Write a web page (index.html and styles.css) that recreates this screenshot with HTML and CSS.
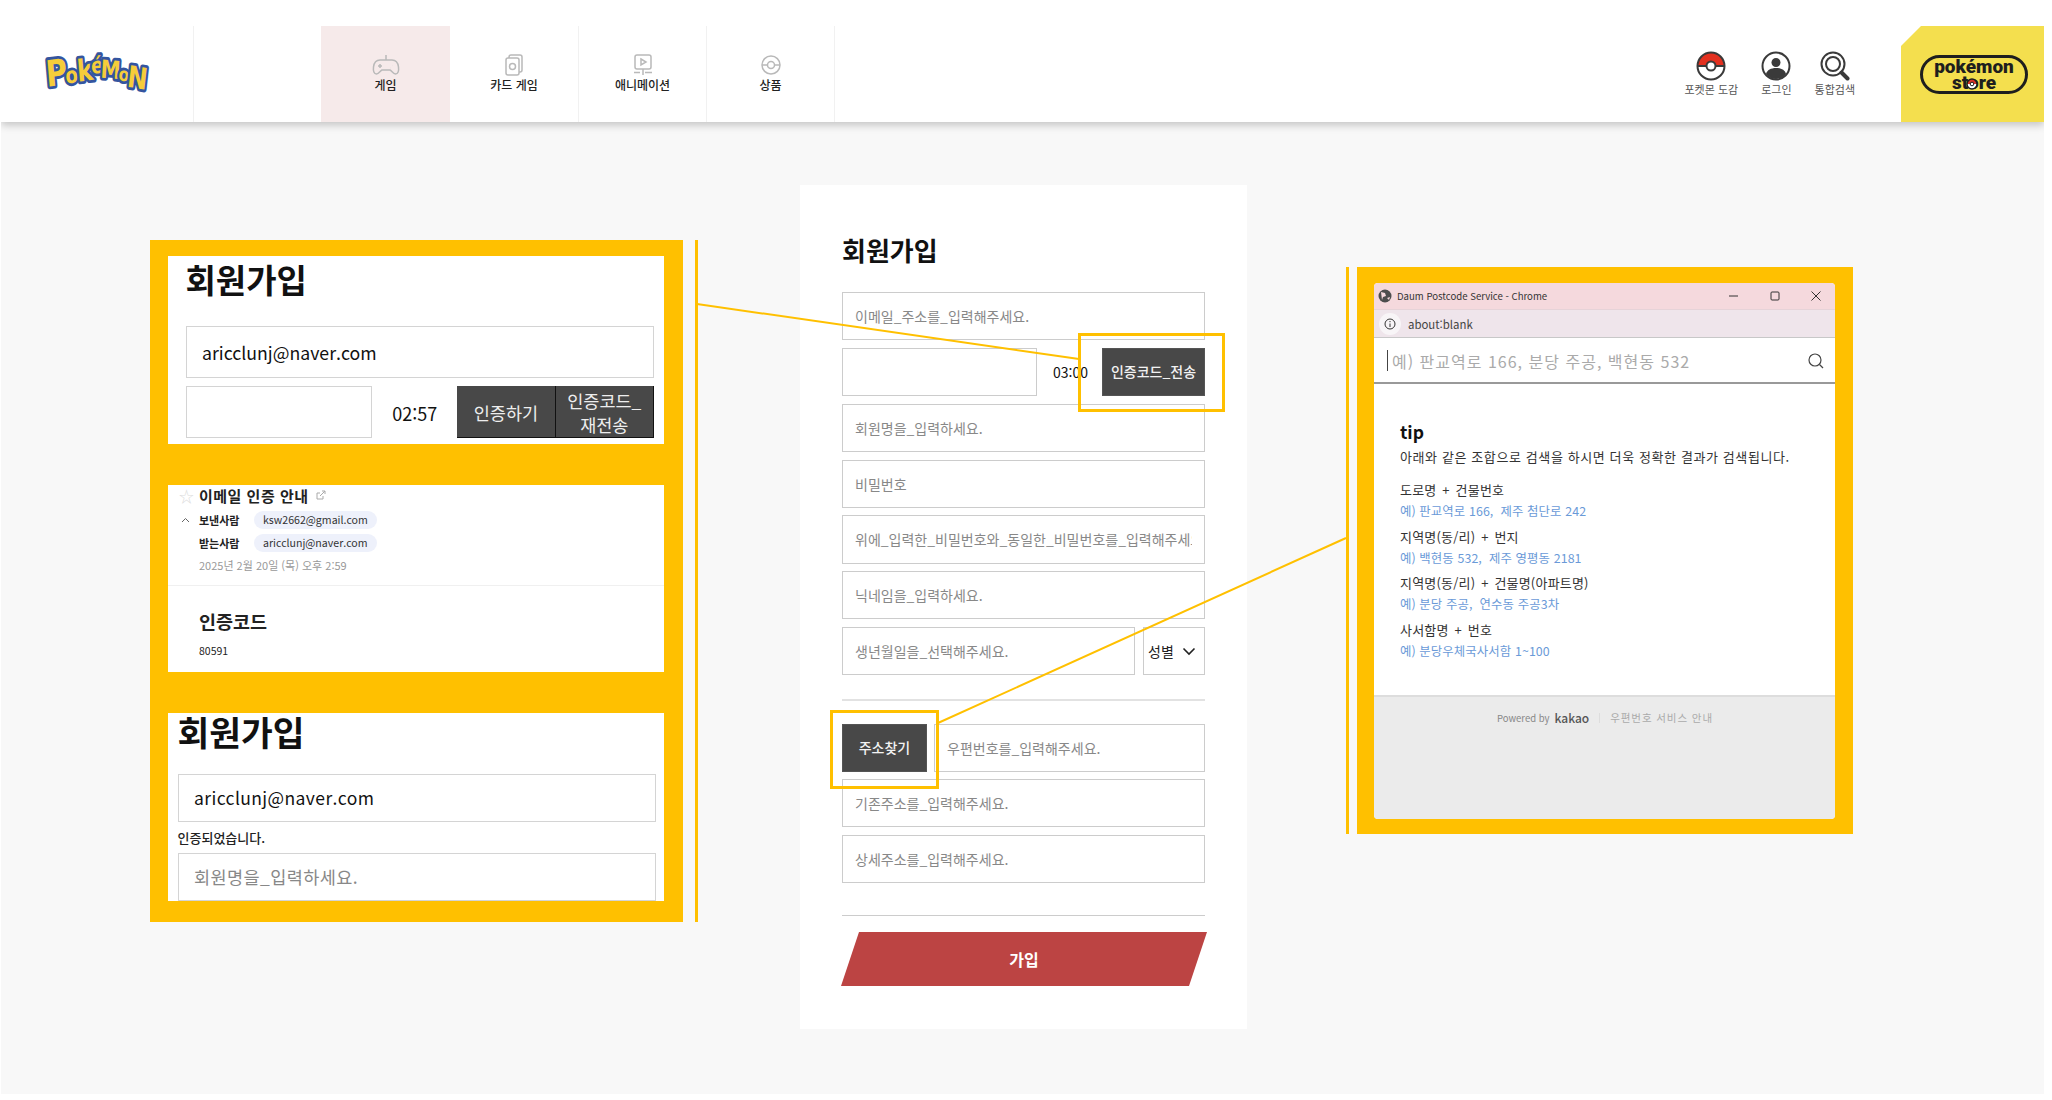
FILE: index.html
```html
<!DOCTYPE html>
<html lang="ko">
<head>
  <meta charset="UTF-8">
  <title>회원가입</title>
  <link rel="stylesheet" href="styles.css">
</head>
<body>
  <div id="shot">
    <header class="top">
      <a class="logo">
        <svg width="104" height="44" viewBox="0 0 104 44">
          <g class="logo-text" transform="translate(0 -7) scale(1 1.25)">
            <text x="1" y="32" font-size="29" transform="rotate(-6 8 22)">P</text>
            <text x="20" y="30" font-size="18" transform="rotate(-8 24 22)">o</text>
            <text x="32" y="28" font-size="24" transform="rotate(-6 38 18)">k</text>
            <text x="46" y="22" font-size="18" transform="rotate(-4 50 16)">é</text>
            <text x="56" y="26" font-size="20" transform="rotate(4 66 16)">M</text>
            <text x="74" y="28" font-size="15" transform="rotate(6 80 20)">o</text>
            <text x="83" y="34" font-size="24" transform="rotate(8 94 22)">N</text>
          </g>
        </svg>
      </a>
      <div class="logo-gap"></div>
      <nav class="menu">
        <a class="menu-item on">
          <svg width="28" height="22" viewBox="0 0 28 22" class="ico"><path d="M14 1v5M8 6h12c4 0 6 3 6.500 7 .5 4-.5 7-3 7-2.500 0-3.500-3-5.500-4h-8c-2 1-3 4-5.500 4s-3.500-3-3-7C2 9 4 6 8 6z"/><path d="M6 12h4M8 10v4M20 11.500h.1M18 14h.1"/></svg>
          <span>게임</span>
        </a>
        <a class="menu-item">
          <svg width="20" height="22" viewBox="0 0 20 22" class="ico"><rect x="2" y="4" width="13" height="17" rx="2"/><path d="M5 4V3a2 2 0 0 1 2-2h9a2 2 0 0 1 2 2v13a2 2 0 0 1-2 2h-1"/><circle cx="8.500" cy="12.500" r="3"/></svg>
          <span>카드 게임</span>
        </a>
        <a class="menu-item">
          <svg width="20" height="22" viewBox="0 0 20 22" class="ico"><rect x="2" y="1" width="16" height="14" rx="2"/><path d="M8 5l5 3-5 3zM10 15v6M1 18.500h6M12 18.500h7"/></svg>
          <span>애니메이션</span>
        </a>
        <a class="menu-item">
          <svg width="20" height="22" viewBox="0 0 20 22" class="ico"><circle cx="10" cy="11" r="9"/><path d="M1 11h5.500M13.500 11H19"/><circle cx="10" cy="11" r="3.500"/></svg>
          <span>상품</span>
        </a>
      </nav>
      <div class="util">
        <a class="util-item">
          <svg width="30" height="30" viewBox="0 0 30 30">
            <path d="M1.500 15a13.500 13.500 0 0 1 27 0z" fill="#e3301f"/>
            <circle cx="15" cy="15" r="13.500" fill="none" stroke="#3a3a3a" stroke-width="2"/>
            <path d="M2 15h26" stroke="#3a3a3a" stroke-width="2"/>
            <circle cx="15" cy="15" r="4.500" fill="#fff" stroke="#3a3a3a" stroke-width="2"/>
          </svg>
          <span>포켓몬 도감</span>
        </a>
        <a class="util-item">
          <svg width="30" height="30" viewBox="0 0 30 30">
            <circle cx="15" cy="15" r="13.500" fill="#fff" stroke="#3a3a3a" stroke-width="2"/>
            <circle cx="15" cy="11.500" r="4.500" fill="#3a3a3a"/>
            <path d="M5 23c1-4 5-6 10-6s9 2 10 6c-2.500 3-6 5-10 5s-7.500-2-10-5z" fill="#3a3a3a"/>
          </svg>
          <span>로그인</span>
        </a>
        <a class="util-item">
          <svg width="30" height="30" viewBox="0 0 30 30" fill="none" stroke="#3a3a3a">
            <circle cx="13" cy="13" r="11.500" stroke-width="2"/>
            <circle cx="13" cy="13" r="7" stroke-width="2"/>
            <path d="M21.500 21.500l6 6" stroke-width="4" stroke-linecap="round"/>
          </svg>
          <span>통합검색</span>
        </a>
      </div>
      <a class="store">
        <div class="store-pill">
          <div class="store-line">pokémon</div>
          <div class="store-line">store</div>
          <svg class="store-ball" width="12" height="12" viewBox="0 0 12 12">
            <path d="M1 6a5 5 0 0 1 10 0z" fill="#d8342a"/>
            <path d="M1 6a5 5 0 0 0 10 0z" fill="#fff"/>
            <circle cx="6" cy="6" r="5" fill="none" stroke="#1e1e1e" stroke-width="1.500"/>
            <circle cx="6" cy="6" r="1.800" fill="#fff" stroke="#1e1e1e"/>
          </svg>
        </div>
      </a>
    </header>

    <main class="stage">
      <section class="callout callout-left">
        <div class="shot-box shot-join">
          <h2 class="shot-title">회원가입</h2>
          <div class="fake-input big">aricclunj@naver.com</div>
          <div class="code-row">
            <div class="fake-input code-input"></div>
            <span class="code-time">02:57</span>
            <div class="code-btns">
              <div class="dark-btn">인증하기</div>
              <div class="dark-btn">인증코드_<br>재전송</div>
            </div>
          </div>
        </div>

        <div class="shot-box shot-mail">
          <div class="mail-head">
            <div class="mail-title"><span class="star">☆</span><b>이메일 인증 안내</b>
              <svg width="10" height="10" viewBox="0 0 10 10" fill="none" stroke="#aaa"><path d="M7 6v3H1V3h3M4 6l5-5M6 1h3v3"/></svg>
            </div>
            <div class="mail-row">
              <svg class="caret" width="9" height="6" viewBox="0 0 9 6" fill="none" stroke="#666"><path d="M1 5l3.500-3.500L8 5"/></svg>
              <b>보낸사람</b><span class="chip">ksw2662@gmail.com</span>
            </div>
            <div class="mail-row"><span class="caret"></span><b>받는사람</b><span class="chip">aricclunj@naver.com</span></div>
            <div class="mail-date">2025년 2월 20일 (목) 오후 2:59</div>
          </div>
          <div class="mail-body">
            <h3>인증코드</h3>
            <p>80591</p>
          </div>
        </div>

        <div class="shot-box shot-done">
          <h2 class="shot-title">회원가입</h2>
          <div class="fake-input wide">aricclunj@naver.com</div>
          <p class="done-msg">인증되었습니다.</p>
          <div class="fake-input wide hint">회원명을_입력하세요.</div>
        </div>
      </section>
      <div class="rule rule-left"></div>

      <section class="card">
        <h1>회원가입</h1>
        <div class="field">이메일_주소를_입력해주세요.</div>
        <div class="row">
          <div class="field code"></div>
          <span class="timer">03:00</span>
          <button class="btn send">인증코드_전송</button>
        </div>
        <div class="field">회원명을_입력하세요.</div>
        <div class="field">비밀번호</div>
        <div class="field clip"><span>위에_입력한_비밀번호와_동일한_비밀번호를_입력해주세요.</span></div>
        <div class="field">닉네임을_입력하세요.</div>
        <div class="row">
          <div class="field birth">생년월일을_선택해주세요.</div>
          <div class="field gender">성별
            <svg width="14" height="9" viewBox="0 0 14 9" fill="none" stroke="#222" stroke-width="1.600"><path d="M1.500 1.500L7 7l5.500-5.500"/></svg>
          </div>
        </div>
        <hr class="line-thick">
        <div class="row">
          <button class="btn addr">주소찾기</button>
          <div class="field zip">우편번호를_입력해주세요.</div>
        </div>
        <div class="field addr-first">기존주소를_입력해주세요.</div>
        <div class="field">상세주소를_입력해주세요.</div>
        <hr class="line-thin">
        <button class="submit">가입</button>
      </section>

      <div class="rule rule-right"></div>
      <section class="callout callout-right">
        <div class="popup">
          <div class="pop-title">
            <svg width="14" height="14" viewBox="0 0 14 14"><circle cx="7" cy="7" r="6.500" fill="#4d4d4d"/><path d="M3 3l4 1 1 3-3 1-1 3zM9 9l3-1-1 3z" fill="#f5d9dd"/></svg>
            <span>Daum Postcode Service - Chrome</span>
            <div class="pop-ctrl">
              <svg width="10" height="10" viewBox="0 0 10 10"><path d="M0 5h9" stroke="#333" stroke-width="1"/></svg>
              <svg width="10" height="10" viewBox="0 0 10 10"><rect x="1" y="1" width="8" height="8" rx="1" fill="none" stroke="#333"/></svg>
              <svg width="10" height="10" viewBox="0 0 10 10"><path d="M.5.500l9 9M9.500.500l-9 9" stroke="#333"/></svg>
            </div>
          </div>
          <div class="pop-addr">
            <span class="pop-info"><svg width="12" height="12" viewBox="0 0 12 12" fill="none" stroke="#333"><circle cx="6" cy="6" r="5"/><path d="M6 5.500V9M6 3v1.200"/></svg></span>
            <span>about:blank</span>
          </div>
          <div class="pop-search">
            <span class="cursor"></span>
            <span class="pop-ph">예) 판교역로 166, 분당 주공, 백현동 532</span>
            <svg width="16" height="16" viewBox="0 0 16 16" fill="none" stroke="#444" stroke-width="1.200"><circle cx="7" cy="7" r="6"/><path d="M11.500 11.500l3.500 3.500"/></svg>
          </div>
          <div class="pop-body">
            <h4>tip</h4>
            <p class="pop-desc">아래와 같은 조합으로 검색을 하시면 더욱 정확한 결과가 검색됩니다.</p>
            <dl>
              <dt>도로명 + 건물번호</dt>
              <dd>예) 판교역로 166,&nbsp; 제주 첨단로 242</dd>
              <dt>지역명(동/리) + 번지</dt>
              <dd>예) 백현동 532,&nbsp; 제주 영평동 2181</dd>
              <dt>지역명(동/리) + 건물명(아파트명)</dt>
              <dd>예) 분당 주공,&nbsp; 연수동 주공3차</dd>
              <dt>사서함명 + 번호</dt>
              <dd>예) 분당우체국사서함 1~100</dd>
            </dl>
          </div>
          <div class="pop-foot">
            <span>Powered by</span><b>kakao</b><i></i><span class="pop-link">우편번호 서비스 안내</span>
          </div>
        </div>
      </section>

      <!-- 강조 박스, 연결선 -->
      <div class="mark mark-send"></div>
      <div class="mark mark-addr"></div>
      <svg class="links" width="2052" height="1100" viewBox="0 0 2052 1100">
        <path d="M697 304L1079 359M938 723L1346 538" stroke="#ffc000" stroke-width="2" fill="none"/>
      </svg>
    </main>
  </div>
</body>
</html>
```

FILE: styles.css
```css
* {
  box-sizing: border-box;
}

html, body {
  margin: 0;
  background: #fff;
}

body {
  font-family: "Noto Sans CJK KR", "Noto Sans", sans-serif;
  color: #222;
}

#shot {
  width: 2043px;
  height: 1094px;
  margin-left: 1px;
  background: #f8f8f8;
  overflow: hidden;
}

/* 상단 메뉴 */
.top {
  display: flex;
  height: 122px;
  padding-top: 26px;
  background: #fff;
  box-shadow: 0 3px 8px rgba(0, 0, 0, .22);
  position: relative;
  z-index: 2;
}

.logo {
  width: 193px;
  padding: 27px 0 0 44px;
  border-right: 1px solid #f1f1f1;
}

.logo svg {
  overflow: visible;
}

.logo-text text {
  font-family: "DejaVu Sans", sans-serif;
  font-weight: 700;
  fill: #f6cd3a;
  stroke: #34559f;
  stroke-width: 4.500px;
  paint-order: stroke;
  stroke-linejoin: round;
}

.logo-gap {
  width: 127px;
}

.menu {
  display: flex;
}

.menu-item {
  width: 128px;
  padding-top: 28px;
  display: flex;
  flex-direction: column;
  align-items: center;
  border-right: 1px solid #f1f1f1;
  font-size: 12px;
  font-weight: 500;
  color: #222;
}

.menu-item span {
  line-height: 18px;
}

.menu-item.on {
  width: 129px;
  background: #f6eaea;
  border-right: 0;
}

.menu-item.on + .menu-item {
  width: 129px;
}

.ico {
  fill: none;
  stroke: #b9b9b9;
  stroke-width: 1.500px;
}

.util {
  margin-left: auto;
  display: flex;
  gap: 23px;
  padding: 25px 46px 0 0;
}

.util-item {
  display: flex;
  flex-direction: column;
  align-items: center;
  font-size: 11px;
  color: #555;
}

.util-item span {
  line-height: 16px;
}

.store {
  width: 143px;
  background: #f4df4e;
  clip-path: polygon(20px 0, 100% 0, 100% 100%, 0 100%, 0 20px);
  padding: 29px 0 0 19px;
}

.store-pill {
  position: relative;
  width: 108px;
  height: 39px;
  padding-top: 1px;
  border: 3px solid #1e1e1e;
  border-radius: 20px;
  text-align: center;
  font-family: Roboto, sans-serif;
  font-size: 19px;
  font-weight: 900;
  color: #1e1e1e;
}

.store-line {
  height: 16px;
  line-height: 15px;
}

.store-ball {
  position: absolute;
  left: 43px;
  top: 20px;
}

/* 본문 */
.stage {
  position: relative;
  display: flex;
  align-items: flex-start;
  height: 972px;
  padding: 63px 0 0 149px;
}

.callout {
  background: #ffc000;
}

.callout-left {
  width: 533px;
  height: 682px;
  margin-top: 55px;
  padding: 16px 19px 16px 18px;
  display: flex;
  flex-direction: column;
  gap: 41px;
}

.rule {
  width: 3px;
  background: #ffc000;
}

.rule-left {
  height: 682px;
  margin: 55px 0 0 12px;
}

.rule-right {
  height: 567px;
  margin: 82px 0 0 99px;
}

.shot-box {
  background: #fff;
  height: 188px;
  width: 496px;
}

.shot-title {
  margin: 0;
  font-size: 33px;
  font-weight: 700;
  line-height: 44px;
  color: #111;
}

.shot-join {
  padding: 1px 10px 0 17.500px;
}

.fake-input {
  border: 1px solid #d4d4d4;
  background: #fff;
  color: #111;
}

.fake-input.big {
  height: 52px;
  margin-top: 25px;
  padding-left: 15.500px;
  font-size: 17.700px;
  line-height: 51px;
}

.code-row {
  display: flex;
  align-items: stretch;
  height: 52px;
  margin-top: 8px;
}

.code-input {
  width: 187px;
}

.code-time {
  width: 85px;
  padding: 5px 0 0 20px;
  font-size: 18px;
  line-height: 44px;
  color: #111;
}

.code-btns {
  display: flex;
  width: 197px;
}

.dark-btn {
  flex: 1;
  display: flex;
  align-items: center;
  justify-content: center;
  text-align: center;
  padding-top: 2px;
  background: #484848;
  border-right: 1px solid #111;
  border-bottom: 1px solid #111;
  color: #eee;
  font-size: 17.500px;
  line-height: 24px;
}

.shot-mail {
  height: 187px;
}

.mail-head {
  height: 101px;
  padding-left: 11px;
  border-bottom: 1px solid #f0f0f0;
}

.mail-title {
  display: flex;
  align-items: center;
  height: 20px;
  margin-bottom: 6px;
  font-size: 15px;
  letter-spacing: .5px;
  gap: 6px;
}

.star {
  width: 14px;
  font-size: 15px;
  color: #ddd;
  text-align: center;
}

.mail-title svg {
  margin-left: 1px;
}

.mail-row {
  display: flex;
  align-items: center;
  height: 18px;
  margin-top: 5px;
  font-size: 11px;
}

.caret {
  width: 9px;
  margin: 0 9px 0 2px;
}

.mail-row b {
  width: 55px;
}

.chip {
  height: 18px;
  padding: 0 9px;
  border-radius: 9px;
  background: #eef1fb;
  font-size: 10.600px;
  line-height: 18px;
  color: #333;
}

.mail-date {
  margin: 5px 0 0 20px;
  font-size: 11px;
  line-height: 16px;
  color: #999;
}

.mail-body {
  padding: 23px 0 0 31px;
}

.mail-body h3 {
  margin: 0;
  font-size: 18.500px;
  line-height: 24px;
}

.mail-body p {
  margin: 11px 0 0;
  font-size: 10.500px;
  line-height: 14px;
}

.shot-done {
  padding: 0 8px 0 9.500px;
}

.shot-done .shot-title {
  font-size: 34.500px;
  line-height: 36px;
}

.fake-input.wide {
  height: 48px;
  margin-top: 25px;
  padding-left: 15.500px;
  font-size: 17.500px;
  line-height: 46px;
  letter-spacing: .4px;
}

.done-msg {
  margin: 6px 0 6px;
  font-size: 13px;
  font-weight: 500;
  line-height: 19px;
}

.fake-input.wide.hint {
  margin-top: 0;
  color: #888;
}

/* 가운데 폼 */
.card {
  width: 447px;
  height: 844px;
  margin-left: 102px;
  padding: 47px 42px 0;
  background: #fff;
  display: flex;
  flex-direction: column;
  gap: 8px;
}

.card h1 {
  margin: 0 0 17px;
  font-size: 26px;
  font-weight: 700;
  line-height: 35px;
  color: #111;
}

.field {
  height: 48px;
  padding-left: 12px;
  border: 1px solid #ccc;
  font-size: 14px;
  line-height: 46px;
  color: #888;
  background: #fff;
  flex: none;
}

.field.clip {
  height: 49px;
  margin-top: -1px;
  white-space: nowrap;
  padding-right: 12px;
}

.field.clip + .field {
  margin-top: -1px;
}

.field.clip span {
  display: block;
  overflow: hidden;
}

.row {
  display: flex;
  flex: none;
  height: 48px;
}

.timer {
  width: 65px;
  padding-left: 16px;
  font-size: 14px;
  line-height: 48px;
  color: #111;
}

.field.code {
  width: 195px;
}

.btn {
  height: 48px;
  padding: 0 0 2px;
  border: 1px solid #555;
  background: #484848;
  color: #f2f2f2;
  font: 500 14px "Noto Sans CJK KR", sans-serif;
}

.btn.send {
  width: 103px;
}

.btn.addr {
  width: 85px;
  margin-right: 7px;
}

.field.birth {
  width: 293px;
  margin-right: 8px;
}

.field.gender {
  flex: 1;
  display: flex;
  align-items: center;
  justify-content: space-between;
  padding: 0 8px 0 4px;
  color: #222;
}

.field.zip {
  flex: 1;
}

.addr-first {
  margin-top: -1px;
}

.line-thick {
  width: 100%;
  margin: 16px 0 15px;
  border: 0;
  border-top: 2px solid #e2e2e2;
}

.line-thin {
  width: 100%;
  margin: 24px 0 8px;
  border: 0;
  border-top: 1px solid #ccc;
}

.submit {
  width: 366px;
  height: 54px;
  margin-left: -1px;
  border: 0;
  background: #bc4443;
  clip-path: polygon(18px 0, 100% 0, 348px 100%, 0 100%);
  color: #fff;
  font: 700 16px "Noto Sans CJK KR", sans-serif;
  flex: none;
}

/* 오른쪽 팝업 */
.callout-right {
  width: 496px;
  height: 567px;
  margin: 82px 0 0 8px;
  padding: 16px 18px 15px 17px;
}

.popup {
  height: 100%;
  display: flex;
  flex-direction: column;
  background: #fff;
  border-radius: 4px;
  overflow: hidden;
}

.pop-title {
  display: flex;
  align-items: center;
  gap: 5px;
  height: 27px;
  padding-left: 4px;
  background: #f5d9dd;
  border-bottom: 1px solid #e6d3d8;
  font-size: 9.600px;
  color: #333;
}

.pop-ctrl {
  display: flex;
  gap: 31px;
  margin-left: auto;
  padding-right: 14px;
}

.pop-addr {
  display: flex;
  align-items: center;
  gap: 7px;
  height: 28px;
  padding-left: 5px;
  background: #efe5eb;
  border-bottom: 1px solid #c8c8c8;
  font-size: 11.400px;
  color: #444;
}

.pop-info {
  display: flex;
  align-items: center;
  justify-content: center;
  width: 22px;
  height: 22px;
  border-radius: 50%;
  background: #f8f5f7;
}

.pop-search {
  display: flex;
  align-items: center;
  height: 45px;
  margin-top: 1px;
  padding: 0 11px 0 13px;
  border-bottom: 2px solid #999;
  font-size: 16px;
  color: #aaa;
}

.cursor {
  width: 1px;
  height: 21px;
  margin-right: 4px;
  background: #444;
}

.pop-ph {
  flex: 1;
  letter-spacing: 1px;
}

.pop-body {
  flex: 1;
  padding: 35px 0 0 26px;
}

.pop-body h4 {
  margin: 0;
  font-size: 17.500px;
  line-height: 26px;
  color: #111;
}

.pop-desc {
  margin: 0;
  font-size: 13px;
  letter-spacing: .6px;
  line-height: 24px;
  color: #333;
}

.pop-body dl {
  margin: 9px 0 0;
}

.pop-body dt {
  font-size: 13px;
  letter-spacing: .2px;
  word-spacing: 2px;
  line-height: 24px;
  color: #333;
}

.pop-body dd {
  margin: -1px 0 3.700px;
  font-size: 12.400px;
  letter-spacing: .1px;
  line-height: 20px;
  color: #6a9ad8;
}

.pop-foot {
  height: 124px;
  padding: 12px 0 0 123px;
  display: flex;
  align-items: flex-start;
  background: #ebebeb;
  border-top: 2px solid #ddd;
  font-size: 9.500px;
  line-height: 18px;
  color: #888;
}

.pop-foot b {
  margin-left: 5px;
  font-size: 12px;
  font-weight: 500;
  color: #555;
}

.pop-foot i {
  width: 1px;
  height: 10px;
  margin: 4px 10px;
  background: #ddd;
}

.pop-link {
  font-size: 10.500px;
  letter-spacing: .9px;
  color: #aaa;
}

/* 주석 요소 */
.mark {
  position: absolute;
  border: 3px solid #ffc000;
  z-index: 1;
}

.mark-send {
  left: 1077px;
  top: 211px;
  width: 147px;
  height: 79px;
}

.mark-addr {
  left: 829px;
  top: 588px;
  width: 109px;
  height: 79px;
}

.links {
  position: absolute;
  left: -1px;
  top: -122px;
  z-index: 1;
  pointer-events: none;
}
```
